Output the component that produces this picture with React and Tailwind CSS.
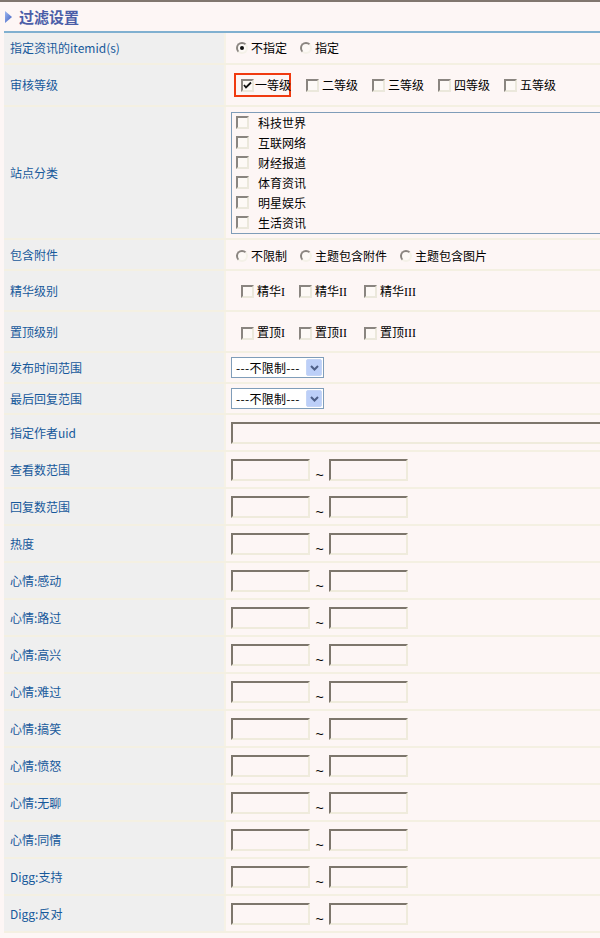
import React from 'react';

const font = { fontFamily: '"Noto Sans CJK SC", "Noto Sans", sans-serif' };
const serifLatin = { fontFamily: '"Liberation Serif", "Noto Sans CJK SC", serif' };

const CheckBox = ({ checked }) => (
  <span className="inline-flex h-[13px] w-[13px] shrink-0 items-center justify-center border-2 border-t-[#8a8580] border-l-[#8a8580] border-b-[#ebe8dc] border-r-[#ebe8dc] bg-[#fdf9f6]">
    {checked && (
      <svg width="9" height="9" viewBox="0 0 9 9">
        <path d="M1 4 L3 6.5 L8 1.5" stroke="#111" strokeWidth="1.8" fill="none" />
      </svg>
    )}
  </span>
);

const Radio = ({ checked }) => (
  <span className="inline-flex h-[12px] w-[12px] shrink-0 items-center justify-center rounded-full border-2 border-t-[#8a8580] border-l-[#8a8580] border-b-[#f4f1e8] border-r-[#f4f1e8] bg-[#fdf9f6]">
    {checked && <span className="h-[4px] w-[4px] rounded-full bg-[#111]" />}
  </span>
);

const Option = ({ type, checked, label, className, latin }) => (
  <span className={`inline-flex items-center ${className}`}>
    {type === 'radio' ? <Radio checked={checked} /> : <CheckBox checked={checked} />}
    <span className="ml-[3px] text-[12px] text-black" style={latin ? serifLatin : undefined}>
      {label}
    </span>
  </span>
);

const TextBox = ({ className }) => (
  <span className={`block h-[22px] border-2 border-t-[#7d766c] border-l-[#7d766c] border-b-[#efebdc] border-r-[#efebdc] bg-[#fdf6f5] ${className}`} />
);

const Select = () => (
  <span className="flex h-[21px] w-[93px] items-center justify-between border border-[#7f9db9] bg-white pl-[4px] pr-[1px]">
    <span className="text-[12px] leading-none tracking-[0.3px] text-black">---不限制---</span>
    <span className="flex h-[17px] w-[16px] items-center justify-center rounded-[2px] border border-[#c5d5f6] bg-[#bccff8]">
      <svg width="9" height="6" viewBox="0 0 9 6">
        <path d="M1 1 L4.5 4.5 L8 1" stroke="#4d5f88" strokeWidth="2" fill="none" />
      </svg>
    </span>
  </span>
);

const Range = () => (
  <div className="flex items-center">
    <TextBox className="w-[79px]" />
    <span
      className="flex w-[19px] justify-center pt-[10px] text-[14px] leading-none text-black"
      style={{ fontFamily: '"Liberation Sans", sans-serif' }}
    >
      ~
    </span>
    <TextBox className="w-[79px]" />
  </div>
);

const Row = ({ label, h, children }) => (
  <div className={`flex border-b-2 border-[#f4f0e2] ${h}`}>
    <div className="flex w-[222px] shrink-0 items-center border-r-2 border-[#f6f2e6] bg-[#efefef] pl-[6px] text-[12px] text-[#17599b]">
      {label}
    </div>
    <div className="flex flex-1 items-center pl-[5px]">{children}</div>
  </div>
);

const sites = ['科技世界', '互联网络', '财经报道', '体育资讯', '明星娱乐', '生活资讯'];
const ranges = [
  '查看数范围', '回复数范围', '热度', '心情:感动', '心情:路过', '心情:高兴', '心情:难过',
  '心情:搞笑', '心情:愤怒', '心情:无聊', '心情:同情', 'Digg:支持', 'Digg:反对',
];

export default function App() {
  return (
    <div className="h-[938px] w-[600px] overflow-hidden bg-[#fdf6f5]" style={font}>
      <div className="h-[2px] bg-[#80766f]" />
      <div className="flex h-[29px] items-center pl-[5px]">
        <svg width="7" height="12" viewBox="0 0 7 12">
          <defs>
            <linearGradient id="tri" x1="0" y1="0" x2="1" y2="1">
              <stop offset="0" stopColor="#9fb9f0" />
              <stop offset="1" stopColor="#3b5cc0" />
            </linearGradient>
          </defs>
          <path d="M0 0 L7 6 L0 12 Z" fill="url(#tri)" />
        </svg>
        <span className="ml-[7px] text-[15px] font-bold leading-none text-[#4b5ea8]">过滤设置</span>
      </div>

      <div className="ml-[4px] w-[600px] border-t-2 border-[#80b0d0]">
        <Row label="指定资讯的itemid(s)" h="h-[32px]">
          <div className="flex pl-[5px]">
            <Option type="radio" checked label="不指定" className="w-[64px]" />
            <Option type="radio" label="指定" className="w-[64px]" />
          </div>
        </Row>

        <Row label="审核等级" h="h-[42px]">
          <div className="flex items-center pl-[3px]">
            <span className="mr-[15px] inline-flex h-[24px] w-[57px] shrink-0 items-center overflow-visible whitespace-nowrap border-2 border-[#f03a10] pl-[5px]">
              <CheckBox checked />
              <span className="ml-[1px] text-[12px] text-black">一等级</span>
            </span>
            <Option label="二等级" className="w-[66px]" />
            <Option label="三等级" className="w-[66px]" />
            <Option label="四等级" className="w-[66px]" />
            <Option label="五等级" className="w-[66px]" />
          </div>
        </Row>

        <Row label="站点分类" h="h-[133px]">
          <div className="w-[380px] border border-[#7f9db9] pl-[4px]">
            {sites.map((s) => (
              <div key={s} className="flex h-[20px] items-center">
                <CheckBox />
                <span className="ml-[9px] text-[12px] text-black">{s}</span>
              </div>
            ))}
          </div>
        </Row>

        <Row label="包含附件" h="h-[31px]">
          <div className="mt-[3px] flex pl-[5px]">
            <Option type="radio" label="不限制" className="w-[64px]" />
            <Option type="radio" label="主题包含附件" className="w-[100px]" />
            <Option type="radio" label="主题包含图片" className="w-[100px]" />
          </div>
        </Row>

        <Row label="精华级别" h="h-[41px]">
          <div className="mt-[2px] flex pl-[10px]">
            <Option latin label="精华I" className="w-[58px]" />
            <Option latin label="精华II" className="w-[65px]" />
            <Option latin label="精华III" className="w-[70px]" />
          </div>
        </Row>

        <Row label="置顶级别" h="h-[41px]">
          <div className="mt-[3px] flex pl-[10px]">
            <Option latin label="置顶I" className="w-[58px]" />
            <Option latin label="置顶II" className="w-[65px]" />
            <Option latin label="置顶III" className="w-[70px]" />
          </div>
        </Row>

        <Row label="发布时间范围" h="h-[31px]">
          <Select />
        </Row>

        <Row label="最后回复范围" h="h-[31px]">
          <Select />
        </Row>

        <Row label="指定作者uid" h="h-[37px]">
          <TextBox className="w-[380px]" />
        </Row>

        {ranges.map((r) => (
          <Row key={r} label={r} h="h-[37px]">
            <Range />
          </Row>
        ))}
      </div>
    </div>
  );
}
